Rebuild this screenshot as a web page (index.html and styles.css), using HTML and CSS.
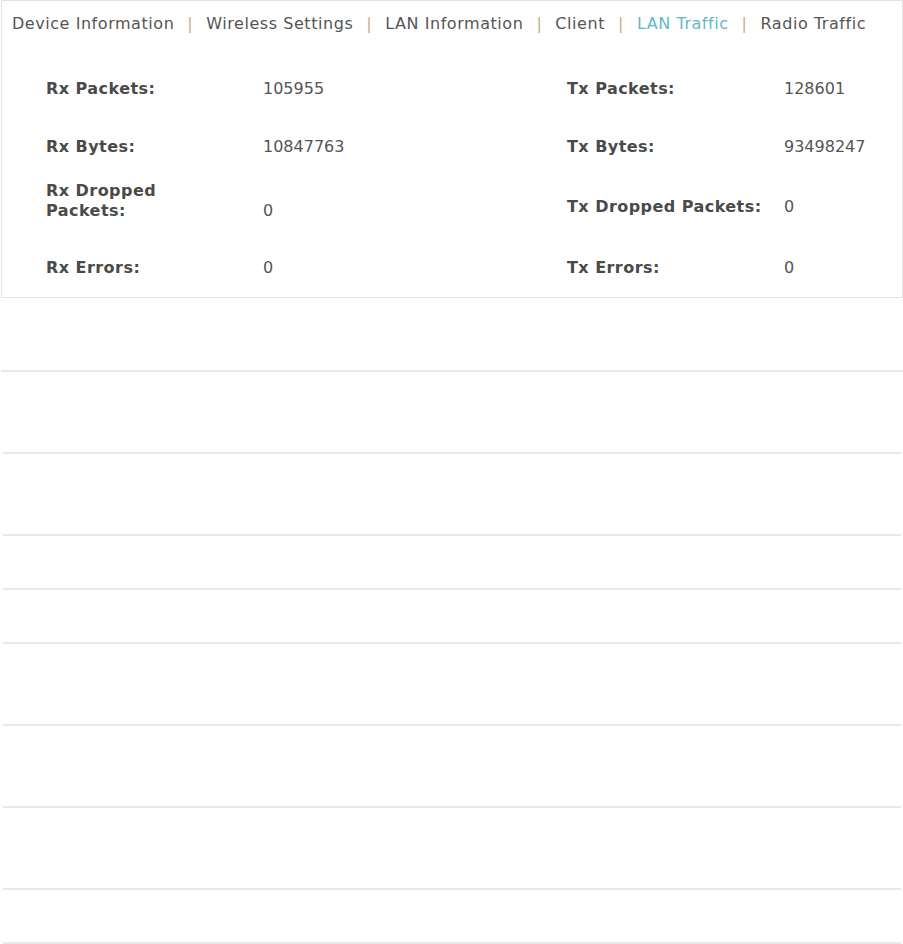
FILE: index.html
```html
<!DOCTYPE html>
<html lang="en">
<head>
	<meta charset="UTF-8">
	<title>LAN Traffic</title>
	<link rel="stylesheet" href="styles.css">
</head>
<body>
<div class="panel">
	<div class="tabs">
		<a class="tab">Device Information</a>
		<span class="sep">|</span>
		<a class="tab">Wireless Settings</a>
		<span class="sep">|</span>
		<a class="tab">LAN Information</a>
		<span class="sep">|</span>
		<a class="tab">Client</a>
		<span class="sep">|</span>
		<a class="tab active">LAN Traffic</a>
		<span class="sep">|</span>
		<a class="tab">Radio Traffic</a>
	</div>

	<div class="stats">
		<div class="pair"><span class="label">Rx Packets:</span><span class="value">105955</span></div>
		<div class="pair"><span class="label">Tx Packets:</span><span class="value">128601</span></div>

		<div class="pair"><span class="label">Rx Bytes:</span><span class="value">10847763</span></div>
		<div class="pair"><span class="label">Tx Bytes:</span><span class="value">93498247</span></div>

		<div class="pair wrap"><span class="label">Rx Dropped Packets:</span><span class="value">0</span></div>
		<div class="pair"><span class="label">Tx Dropped Packets:</span><span class="value">0</span></div>

		<div class="pair"><span class="label">Rx Errors:</span><span class="value">0</span></div>
		<div class="pair"><span class="label">Tx Errors:</span><span class="value">0</span></div>
	</div>
</div>

<!-- empty list rows below the panel -->
<div class="rows">
	<div class="row first"></div>
	<div class="row tall"></div>
	<div class="row tall"></div>
	<div class="row short"></div>
	<div class="row short"></div>
	<div class="row tall"></div>
	<div class="row tall"></div>
	<div class="row tall"></div>
	<div class="row short"></div>
</div>
</body>
</html>
```

FILE: styles.css
```css
*{margin:0;padding:0;box-sizing:border-box;}
html,body{height:100%;background:#fff;}
body{
	font-family:"DejaVu Sans",Verdana,sans-serif;
	font-size:16px;
	color:#555;
	overflow:hidden;
}
.panel{
	margin-left:1px;
	height:298px;
	border:1px solid #e3e3e3;
	padding-top:13px;
}
.tabs{
	display:flex;
	padding-left:10px;
	line-height:20px;
	letter-spacing:0.55px;
	white-space:nowrap;
}
.tab{color:#555;text-decoration:none;}
.tab.active{color:#62b9c9;}
.sep{
	color:#c9ad8c;
	margin:0 13px;
}
.stats{
	display:grid;
	grid-template-columns:521px 1fr;
	grid-template-rows:57px 59px 61px 61px;
	margin-top:26px;
	padding-left:44px;
	line-height:20px;
}
.pair{
	display:flex;
	align-items:center;
}
.label{
	width:217px;
	font-weight:bold;
	color:#4a4a4a;
	letter-spacing:0.45px;
}
.value{color:#555;}
.pair.wrap{align-items:last baseline;}
.pair.wrap .label{
	padding-right:95px;
	padding-bottom:16px;
}
.rows{padding:0 2px 0 3px;}
.row{border-bottom:2px solid #e4e9ef;}
.row.first{height:74px;margin:0 -2px 0 -2px;}
.row.tall{height:82px;}
.row.short{height:54px;}
```
